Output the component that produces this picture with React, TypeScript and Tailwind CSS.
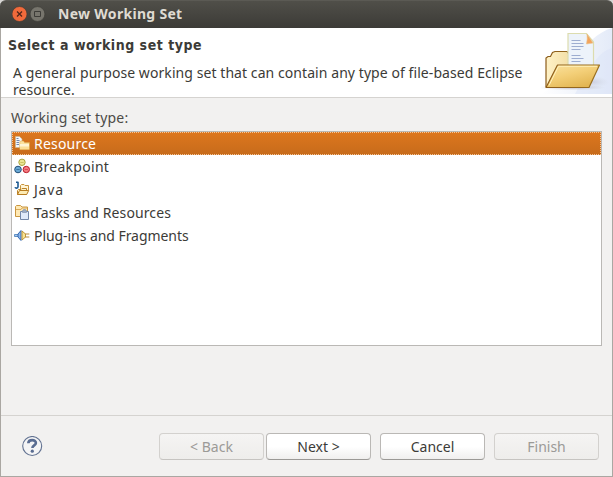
import type { ReactNode } from "react";

function ResourceIcon() {
  return (
    <svg className="mb-px" width="16" height="16" viewBox="0 0 16 16">
      <path d="M1.5 1.5h4L8 4v8.5H1.5z" fill="#f4f6fb" stroke="#c9ba90" strokeWidth="0.6" />
      <path d="M2.5 3.5h2M2.5 5.5h3M2.5 7.5h2.5M2.5 9.5h2.5" stroke="#7088ae" strokeWidth="1" />
      <path d="M5.8 14.6V6.8l.8-.8h3l1 1.6h4.9v7z" fill="#fbe3a0" stroke="#d8a040" strokeWidth="0.5" />
      <path d="M6 9h9v3H6z" fill="#fff5d4" />
      <path d="M6 11.5h9v2.8H6z" fill="#fbdf97" />
    </svg>
  );
}

function BreakpointIcon() {
  return (
    <svg className="mb-px" width="16" height="16" viewBox="0 0 16 16">
      <circle cx="8" cy="4.3" r="3.2" fill="#ece795" stroke="#aaa43f" />
      <path d="M6.3 4.5h3.4" stroke="#c9c266" />
      <circle cx="4" cy="11.5" r="3.3" fill="#6aa8d4" stroke="#235078" />
      <path d="M2.3 11.5h3.4" stroke="#3c74a0" />
      <circle cx="12.3" cy="11.5" r="3.2" fill="#f47a80" stroke="#b9202d" />
      <path d="M10.6 11.5H14" stroke="#d94c56" />
    </svg>
  );
}

function JavaIcon() {
  return (
    <svg className="mb-px" width="16" height="16" viewBox="0 0 16 16">
      <path d="M6.5 8V4.5l1-1h2.5l1 1h3.5v5" fill="#fff5d6" stroke="#c8943c" />
      <path d="M3.5 13.5v-4l1-1h2.5l1-1h4.5v6z" fill="#fff3cb" stroke="#bd8429" />
      <path d="M3.5 13.5l2-4h9.2l-2 4z" fill="#fdebb4" stroke="#b87c20" />
      <path d="M4 .8v5c0 1.8-2.5 1.6-3 .4M2 1.2h2" fill="none" stroke="#1e5a91" strokeWidth="1.6" />
    </svg>
  );
}

function TasksIcon() {
  return (
    <svg className="mb-px" width="16" height="16" viewBox="0 0 16 16">
      <path d="M1.5 12.5v-10l1-1h4l1.5 1.5h5.5v9.5z" fill="#ffe9b4" stroke="#c99640" />
      <path d="M2 5.5h5l1-1.5h5" fill="none" stroke="#d9ab5c" />
      <path d="M6.5 7.5h8v8h-8z" fill="#e1eafa" stroke="#7487a8" />
      <path d="M8.5 8.5V6.5h1v-1h2v1h1v2z" fill="#9aabc4" stroke="#8795b0" strokeWidth=".7" />
    </svg>
  );
}

function PluginIcon() {
  return (
    <svg className="mb-px" width="16" height="16" viewBox="0 0 16 16">
      <path d="M.5 7.5h4v2h-4z" fill="#a9c7ea" stroke="#427bb9" strokeWidth=".8" />
      <path d="M4 7l3-3.5v10L4 10z" fill="#8bb6ec" stroke="#285eaa" strokeWidth=".9" />
      <path d="M8 4l3.5 3v3L8 13z" fill="#f9e494" stroke="#b68c2d" strokeWidth=".9" />
      <path d="M11 7h4.3M11 10h4.3" stroke="#b98b3a" />
    </svg>
  );
}

function FolderBanner() {
  return (
    <svg className="shrink-0" width="71" height="66" viewBox="0 0 71 66">
      <defs>
        <linearGradient id="sweep" x1="0" x2="1">
          <stop stopColor="#fff" /><stop offset="1" stopColor="#dbe4f6" />
        </linearGradient>
        <linearGradient id="front" x1="0" y1="0" x2=".6" y2="1">
          <stop stopColor="#fae2a0" /><stop offset=".5" stopColor="#f3cf78" /><stop offset="1" stopColor="#e3b653" />
        </linearGradient>
        <linearGradient id="rear" x1="0" x2="1">
          <stop stopColor="#fff2c7" /><stop offset="1" stopColor="#e9cf8c" />
        </linearGradient>
        <linearGradient id="outline" x1="0" x2="1">
          <stop stopColor="#8c5c1a" /><stop offset="1" stopColor="#9b7120" />
        </linearGradient>
        <radialGradient id="shade"><stop stopColor="#887d99" stopOpacity=".5" /><stop offset="1" stopColor="#bbb" stopOpacity="0" /></radialGradient>
      </defs>
      <path d="M71 0C57 4 45 16 36 30C29 41 17 56 0 66H71z" fill="url(#sweep)" opacity=".75" />
      <path d="M71 20C59 23 48 38 34 66H71z" fill="#d9e3f7" opacity=".45" />
      <ellipse cx="31" cy="59.5" rx="34" ry="3" fill="url(#shade)" />
      <ellipse cx="51" cy="54" rx="17" ry="6" fill="url(#shade)" opacity=".5" />
      <path d="M5 58.5V30l2-1.5h2.5l2-4 2.5-1H26l3 4H48v31z" fill="url(#rear)" stroke="url(#outline)" strokeWidth="1.2" />
      <path d="M27 5.5H45.5L52.5 14v31H27z" fill="#edf3fa" stroke="#dcdcae" strokeWidth="1.2" />
      <path d="M46 6l6 9-6.5 1 .7-5z" fill="#f3a45c" stroke="#eac48d" strokeWidth=".6" />
      <path d="M30.5 12.5h9M30.5 15.5h12M30.5 18.5h12M30.5 21.5h9M30.5 27.5h9M30.5 30.5h12M30.5 33.5h9" stroke="#9dadd0" strokeWidth="1" />
      <path d="M5 59.5L16.5 37H58.5L48 59.5z" fill="url(#front)" stroke="url(#outline)" strokeWidth="1.2" strokeLinejoin="round" />
      <path d="M8 57.5L17.5 38.3H56" fill="none" stroke="#fff0ba" strokeWidth="1" />
    </svg>
  );
}

const items: { label: string; icon: ReactNode; tracking: string }[] = [
  { label: "Resource", icon: <ResourceIcon />, tracking: "tracking-[0.2px]" },
  { label: "Breakpoint", icon: <BreakpointIcon />, tracking: "tracking-[0.3px]" },
  { label: "Java", icon: <JavaIcon />, tracking: "tracking-[0.8px]" },
  { label: "Tasks and Resources", icon: <TasksIcon />, tracking: "tracking-[0.1px]" },
  { label: "Plug-ins and Fragments", icon: <PluginIcon />, tracking: "tracking-[-0.06px]" },
];

function DialogButton({ children, disabled = false }: { children: ReactNode; disabled?: boolean }) {
  return (
    <button
      disabled={disabled}
      className={`h-[27px] w-[105px] rounded-[4px] border text-[14px] leading-none ${
        disabled
          ? "border-[#d3d1ce] border-b-[#c6c4c1] bg-linear-to-b from-[#f5f4f3] to-[#eeedeb] text-[#9b9a97]"
          : "border-[#bab8b5] border-b-[#9b9996] bg-linear-to-b from-white from-50% to-[#f0efee] text-[#3c3b37]"
      }`}
    >
      {children}
    </button>
  );
}

export default function App() {
  return (
    <div className="flex h-[477px] w-[613px] flex-col overflow-hidden bg-[#d8d7d5] font-['Noto_Sans',sans-serif] text-[14px] text-[#3c3b37]">
      <header className="flex h-7 shrink-0 items-center rounded-t-[6px] border-t border-[#5b5a54] bg-linear-to-b from-[#504f49] to-[#3c3b37] pl-3">
        <svg className="-mt-px" width="35" height="18" viewBox="0 0 35 18">
          <circle cx="7.5" cy="9" r="7.5" fill="#f16a3b" stroke="#383733" strokeWidth=".6" />
          <path d="M5 6.5l5 5M10 6.5l-5 5" stroke="#51261a" strokeWidth="1.3" />
          <circle cx="25.5" cy="9" r="7.4" fill="#77756d" stroke="#383733" strokeWidth=".6" />
          <path d="M22.5 6.5h6v5h-6z" fill="none" stroke="#3d3c38" />
        </svg>
        <h1 className="-mt-[2px] ml-[11px] text-[14px] leading-none font-bold tracking-[0.3px] text-[#dfdbd2]">New Working Set</h1>
      </header>
      <main className="flex min-h-0 flex-1 flex-col border-x border-b border-[#aaa7a2] bg-[#f2f1f0]">
        <section className="flex h-[70px] shrink-0 justify-between border-b border-[#d5d3d0] bg-white pl-[7px]">
          <div className="pt-2">
            <h2 className="font-['DejaVu_Sans_Condensed','DejaVu_Sans',sans-serif] text-[14px] leading-[18px] font-bold tracking-[0.52px]">Select a working set type</h2>
            <p className="mt-[10px] ml-[5px] w-[520px] text-[14px] leading-[17px] tracking-[0.07px]">
              A general purpose working set that can contain any type of file-based Eclipse resource.
            </p>
          </div>
          <FolderBanner />
        </section>
        <section className="h-[318px] shrink-0 border-b border-[#d5d3d0] px-[10px] pt-[11px]">
          <label className="block h-[22px] text-[14px] leading-[18px] tracking-[0.15px] text-[#4c4b47]">Working set type:</label>
          <ul className="h-[215px] border border-[#bab8b5] bg-white">
            {items.map((item, i) => (
              <li key={item.label} className={`flex h-[23px] items-center pl-[2px] ${i === 0 ? "bg-linear-to-b from-[#dd771e] to-[#c76b1b] text-white outline-1 -outline-offset-1 outline-dotted outline-[#f5c597]" : ""}`}>
                {item.icon}
                <span className={`ml-1 leading-none ${item.tracking}`}>{item.label}</span>
              </li>
            ))}
          </ul>
        </section>
        <footer className="flex flex-1 items-center pt-px pr-[13px] pl-[21px]">
          <svg className="mb-px" width="21" height="21" viewBox="0 0 21 21">
            <circle cx="10.2" cy="10" r="9.5" fill="#f4f4f5" stroke="#627291" strokeWidth="1.1" />
            <path d="M6.3 7.2c.2-4.2 7.7-4 7.6-.2 0 2.4-3.5 2.4-3.5 5" fill="none" stroke="#596c91" strokeWidth="2.6" />
            <circle cx="10.3" cy="15.2" r="1.6" fill="#596c91" />
          </svg>
          <div className="ml-auto flex">
            <DialogButton disabled>&lt; Back</DialogButton>
            <div className="ml-[2px] flex gap-[9px]">
              <DialogButton>Next &gt;</DialogButton>
              <DialogButton>Cancel</DialogButton>
              <DialogButton disabled>Finish</DialogButton>
            </div>
          </div>
        </footer>
      </main>
    </div>
  );
}
